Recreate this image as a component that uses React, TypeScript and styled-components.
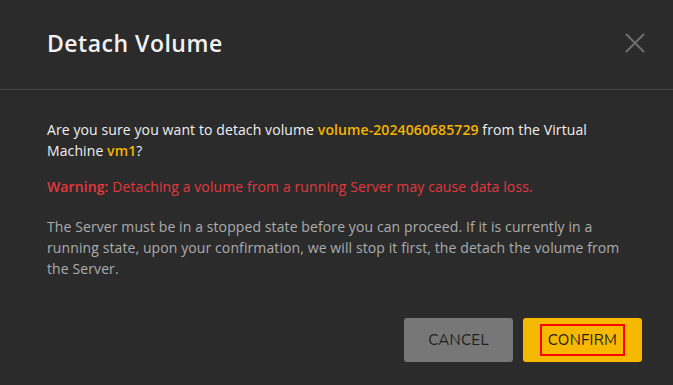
import React from "react";
import styled, { createGlobalStyle } from "styled-components";

const Global = createGlobalStyle`
  html, body { margin: 0; padding: 0; background: #2b2b2b; }
  body { font-family: "Open Sans", "Lato", sans-serif; }
  * { box-sizing: border-box; }
`;

const Dialog = styled.div`
  width: 673px;
  height: 385px;
  background: #2b2b2b;
  display: flex;
  flex-direction: column;
`;

const Header = styled.div`
  height: 90px;
  display: flex;
  align-items: center;
  justify-content: space-between;
  padding: 0 26px 4px 47px;
  border-bottom: 1px solid #454545;
`;

const Title = styled.h2`
  margin: 0;
  font-size: 23px;
  font-weight: 600;
  letter-spacing: 0.5px;
  color: #f2f2f2;
`;

const CloseButton = styled.button`
  background: none;
  border: none;
  padding: 0;
  width: 24px;
  height: 24px;
  display: flex;
  cursor: pointer;
`;

const Body = styled.div`
  padding: 29px 47px 0 47px;
  display: flex;
  flex-direction: column;
  gap: 15px;
  flex: 1;
`;

const Text = styled.p<{ $tone?: "main" | "warn" | "muted" }>`
  margin: 0;
  font-size: 14px;
  line-height: 21px;
  letter-spacing: 0.1px;
  font-weight: ${(p) => (p.$tone === "main" ? 500 : 400)};
  color: ${(p) =>
    p.$tone === "warn" ? "#e2383f" : p.$tone === "muted" ? "#ababab" : "#f0f0f0"};
`;

const Muted = styled(Text)`
  margin-top: 4px;
`;

const Highlight = styled.span`
  color: #f5b400;
  font-weight: 600;
`;

const Strong = styled.span`
  font-weight: 600;
`;

const Footer = styled.div`
  display: flex;
  justify-content: flex-end;
  gap: 10px;
  padding: 0 31px 23px 0;
`;

const Button = styled.button<{ $variant: "cancel" | "confirm" }>`
  height: 44px;
  border: none;
  border-radius: 3px;
  font-family: "Nunito", "Lato", sans-serif;
  font-size: 15px;
  letter-spacing: 0.3px;
  color: #1e1e1e;
  width: ${(p) => (p.$variant === "cancel" ? "109px" : "119px")};
  background: ${(p) => (p.$variant === "cancel" ? "#777777" : "#f7b800")};
  display: flex;
  align-items: center;
  justify-content: center;
  padding: 0;
`;

const FocusRing = styled.span`
  border: 2px solid #ff0000;
  padding: 5px 6px;
  line-height: 18px;
`;

export default function App() {
  return (
    <>
      <Global />
      <Dialog>
        <Header>
          <Title>Detach Volume</Title>
          <CloseButton aria-label="Close">
            <svg width="24" height="24" viewBox="0 0 24 24">
              <path d="M3 3 L21 21 M21 3 L3 21" stroke="#6e6e6e" strokeWidth="2" />
            </svg>
          </CloseButton>
        </Header>
        <Body>
          <Text $tone="main">
            Are you sure you want to detach volume{" "}
            <Highlight>volume-2024060685729</Highlight> from the Virtual Machine{" "}
            <Highlight>vm1</Highlight>?
          </Text>
          <Text $tone="warn">
            <Strong>Warning:</Strong> Detaching a volume from a running Server may cause data loss.
          </Text>
          <Muted $tone="muted">
            The Server must be in a stopped state before you can proceed. If it is currently in a
            running state, upon your confirmation, we will stop it first, the detach the volume from
            the Server.
          </Muted>
        </Body>
        <Footer>
          <Button $variant="cancel">CANCEL</Button>
          <Button $variant="confirm">
            <FocusRing>CONFIRM</FocusRing>
          </Button>
        </Footer>
      </Dialog>
    </>
  );
}
